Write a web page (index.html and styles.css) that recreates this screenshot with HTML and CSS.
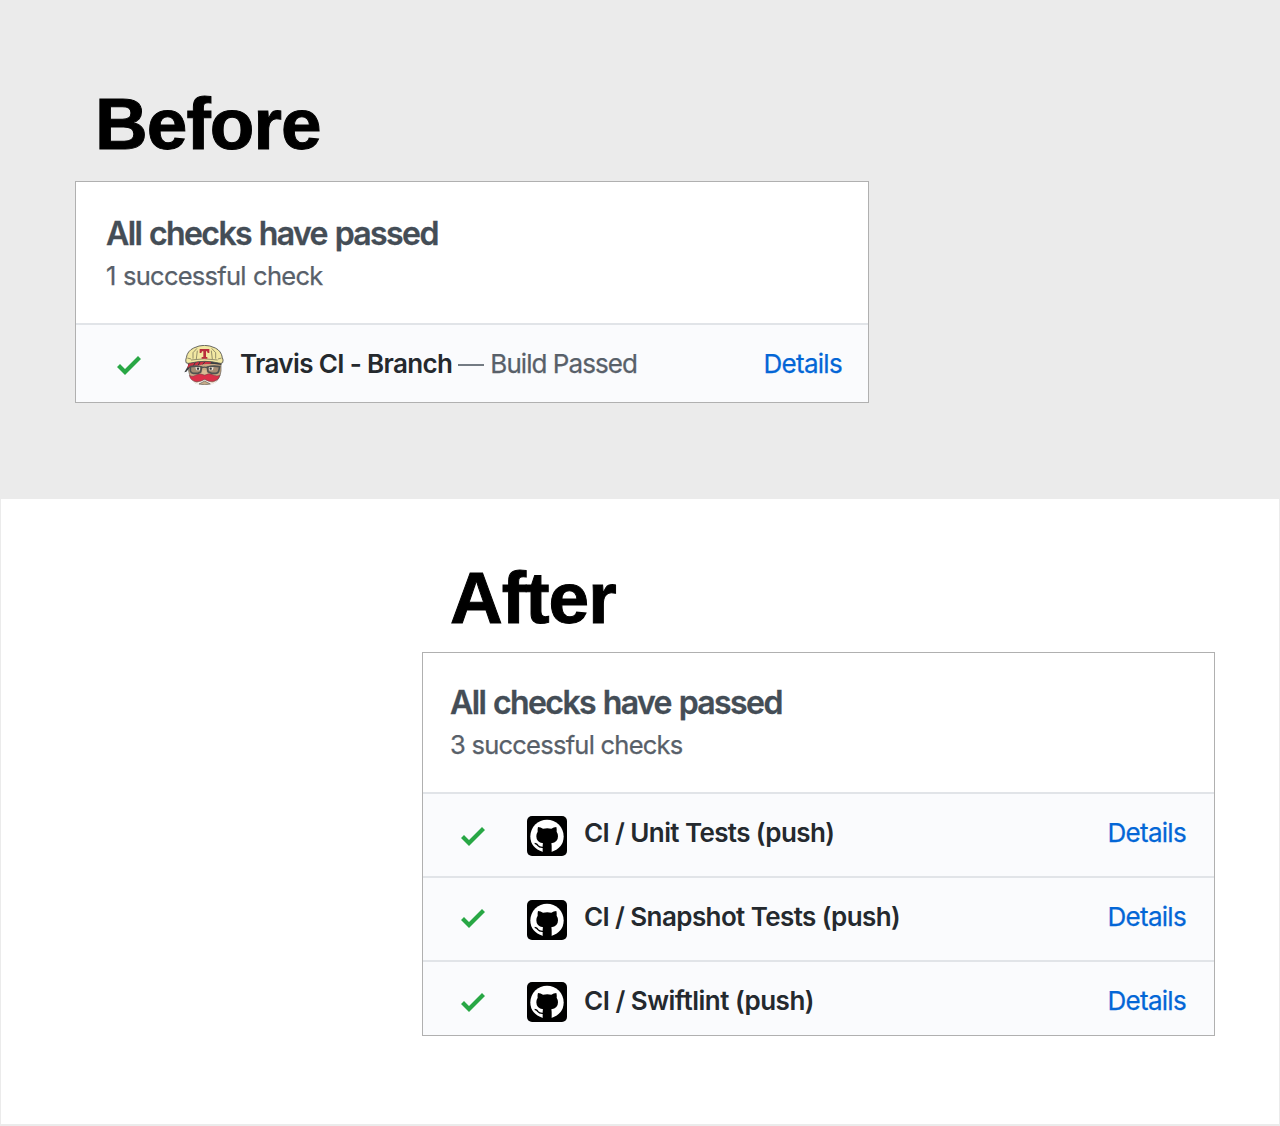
FILE: index.html
```html
<!DOCTYPE html>
<html lang="en">
<head>
<meta charset="utf-8">
<title>Checks: before and after</title>
<link rel="stylesheet" href="styles.css">
</head>
<body>
<svg class="defs" width="0" height="0" aria-hidden="true">
  <symbol id="check" viewBox="0 3.5 12 9.5"><path fill="#28a745" d="M12 5l-8 8-4-4 1.5-1.5L4 10l6.5-6.5L12 5z"/></symbol>
  <symbol id="github" viewBox="30 30 120 120">
    <rect x="30" y="30" width="120" height="120" rx="15" fill="#000"/>
    <path fill="#fff" d="M78 138Q40 126 40 91a50 50 0 0 1 100 0q0 35-37 47z"/>
    <path fill="#000" d="M63 63q8 0 15 5 13-2 25 0 7-5 15-5 2 7 1 14 4 6 4 14 0 18-20 21 1 4 1 9v18H77v-18q0-5 1-9-20-3-20-21 0-8 4-14-1-7 1-14z"/>
    <path fill="none" stroke="#000" stroke-width="4" d="M53 112q7 1 10 7 4 6 16 5"/>
  </symbol>
</svg>

<section class="before">
  <h1 class="title">Before</h1>
  <div class="panel">
    <header class="summary">
      <h2 class="status">All checks have passed</h2>
      <p class="count count-one">1 successful check</p>
    </header>
    <div class="row">
      <svg class="check"><use href="#check"/></svg>
      <svg class="avatar" viewBox="30 30 120 120">
        <path fill="#c9aa84" stroke="#5d5750" stroke-width="2" d="M43 84h98v24q-3 26-22 36-25 9-54 0Q48 132 44 108z"/>
        <path fill="#3b3f43" d="M42 78q48-8 100 0v12q-46-8-90 2l-15 18-6 2 11-19z"/>
        <path fill="#cf3143" d="M45 84q30-8 66-3l-2 5q-24 0-39 6-13-1-23 4l-7 2z"/>
        <path stroke="#343a3e" stroke-width="3" d="M65 81l-7 11m21-13-6 11m21-11-8 9"/>
        <path fill="#f2e8a2" stroke="#4a4b49" stroke-width="2.500" d="M36 83q-2-9 1-15 3-20 22-29 32-16 65 0 18 9 21 29 4 7 1 15-5 4-12 1-41-10-84 0-8 3-14-1z"/>
        <path fill="none" stroke="#65624f" stroke-width="2" d="M40 69l11 3m81 0l11-3M57 71V53l12-13M125 71V53l-12-13M67 72l3-25M115 72l-3-25M51 75q39-7 80 0"/>
        <path fill="#b92e3d" d="M77 42h29v12h-5l-2-5h-3v17h4v5H83v-5h5V49h-4l-2 5h-5z"/>
        <path fill="#a58d73" stroke="#505351" stroke-width="5" d="M49 95q19-4 34 1l-3 15-8 4H58q-7-1-9-7zm51 1q18-5 37-1l-3 14q-2 5-8 6h-13l-11-5z"/>
        <path fill="none" stroke="#505351" stroke-width="4" d="M83 98q8-3 17 0"/>
        <path fill="#eee9df" d="M64 97h14v9H67zm41 0h14l-3 9h-11z"/>
        <circle cx="72" cy="101" r="3.500" fill="#34383b"/><circle cx="110" cy="101" r="3.500" fill="#34383b"/>
        <path fill="#d9bc94" d="M86 106h10l5 11H82z"/>
        <path fill="#f3efe9" d="M50 126l10 13q7 5 12 3l19-8 20 8q10 1 14-4l8-11-9 16q-14 10-32 8-24 2-34-10z"/>
        <path fill="#db3048" stroke="#6d414a" stroke-width="1.500" d="M92 121q-14-8-26-1-9 6-16 3l-4-2q3 16 20 19 15 1 26-7 13 9 27 6 15-3 19-18-9 4-20-1-14-8-26 1z"/>
        <path fill="#c4aa88" stroke="#424543" stroke-width="1.500" d="M75 147l17-9 17 9q-17 5-34 0z"/>
      </svg>
      <p class="name"><strong class="travis">Travis CI - Branch</strong><span class="note"><span class="dash"></span>Build Passed</span></p>
      <a class="details">Details</a>
    </div>
  </div>
</section>

<section class="after">
  <h1 class="title">After</h1>
  <div class="panel">
    <header class="summary">
      <h2 class="status">All checks have passed</h2>
      <p class="count">3 successful checks</p>
    </header>
    <div class="row row-first">
      <svg class="check"><use href="#check"/></svg>
      <svg class="avatar"><use href="#github"/></svg>
      <p class="name"><strong>CI / Unit Tests (push)</strong></p>
      <a class="details">Details</a>
    </div>
    <div class="row row-second">
      <svg class="check"><use href="#check"/></svg>
      <svg class="avatar"><use href="#github"/></svg>
      <p class="name"><strong>CI / Snapshot Tests (push)</strong></p>
      <a class="details">Details</a>
    </div>
    <div class="row row-last">
      <svg class="check"><use href="#check"/></svg>
      <svg class="avatar"><use href="#github"/></svg>
      <p class="name"><strong class="swiftlint">CI / Swiftlint (push)</strong></p>
      <a class="details">Details</a>
    </div>
  </div>
</section>
</body>
</html>
```
FILE: styles.css
```css
* { box-sizing: border-box; }
body {
  margin: 0;
  width: 1280px;
  height: 1126px;
  background: #ebebeb;
  font-family: Inter, "Liberation Sans", sans-serif;
  overflow: hidden;
}
h1, h2, p { margin: 0; }
.defs { display: block; }
.before { height: 499px; padding: 84px 0 0 75px; }
.after {
  height: 625px;
  margin: 0 1px 2px;
  padding: 59px 0 0 421px;
  background: #fff;
}
.title {
  font: bold 73px/79px "Liberation Sans", Arial, sans-serif;
  letter-spacing: -.95px;
  -webkit-text-stroke: 1px #000;
  color: #000;
}
.before .title { height: 97px; padding-left: 20px; }
.after .title { height: 94px; padding-left: 28px; }
.panel { border: 1px solid #b0b0b0; background: #fff; }
.before .panel { width: 794px; height: 222px; }
.after .panel { width: 793px; height: 384px; }
.summary { height: 141px; padding: 32px 0 0 30px; }
.after .summary { height: 139px; padding: 30px 0 0 27px; }
.status {
  font-size: 32px;
  line-height: 40px;
  font-weight: 600;
  letter-spacing: -1.6px;
  word-spacing: 1.3px;
  -webkit-text-stroke: .3px #444d56;
  color: #444d56;
}
.count {
  margin-top: 4px;
  font-size: 25.5px;
  line-height: 36px;
  letter-spacing: -.75px;
  -webkit-text-stroke: .25px #586069;
  color: #586069;
}
.count-one { word-spacing: 1px; }
.row {
  display: flex;
  align-items: flex-start;
  height: 79px;
  padding: 0 26px 0 41px;
  border-top: 2px solid #e1e4e8;
  background: #fafbfd;
  font-size: 26px;
  line-height: 36px;
}
.after .row { height: 84px; padding: 0 28px 0 38px; }
.after .row-last { height: 75px; }
.check { flex: none; width: 24px; height: 19px; margin-top: 31px; }
.row-first .check { margin-top: 33px; }
.avatar { flex: none; width: 40px; height: 40px; margin: 20px 16px 0 43px; }
.after .avatar { margin-left: 42px; margin-right: 17px; }
.row-first .avatar, .row-second .avatar { margin-top: 22px; }
.name { display: flex; flex: 1; padding-top: 21px; white-space: nowrap; }
.name strong { font-weight: 600; letter-spacing: -.6px; color: #24292e; }
.name .travis { letter-spacing: -.64px; }
.name .swiftlint { letter-spacing: -.5px; }
.note {
  display: flex;
  align-items: center;
  letter-spacing: -.95px;
  -webkit-text-stroke: .25px #586069;
  color: #586069;
}
.dash { width: 26px; height: 2px; margin: 2px 6px 0 6px; background: #737b83; }
.details {
  padding-top: 21px;
  letter-spacing: -.7px;
  -webkit-text-stroke: .25px #0366d6;
  color: #0366d6;
}
```
